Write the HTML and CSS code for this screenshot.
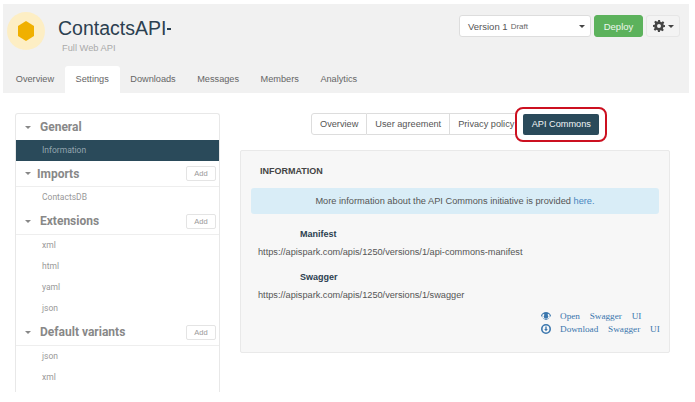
FILE: index.html
```html
<!DOCTYPE html>
<html lang="en">
<head>
<meta charset="utf-8">
<title>ContactsAPI</title>
<link rel="stylesheet" href="styles.css">
</head>
<body>
<header class="top">
  <div class="top-row">
    <div class="logo">
      <svg width="16" height="20" viewBox="0 0 16 20"><polygon points="8,0 16,5 16,15 8,20 0,15 0,5" fill="#f0b000"/></svg>
    </div>
    <div class="title-block">
      <h1 class="title">ContactsAPI<span class="title-caret"></span></h1>
      <div class="subtitle">Full Web API</div>
    </div>
    <div class="actions">
      <div class="version"><span class="version-name">Version 1</span> <small class="draft">Draft</small><span class="caret dark"></span></div>
      <button class="deploy">Deploy</button>
      <button class="gear">
        <svg width="12" height="12" viewBox="0 0 24 24"><path fill="#444" fill-rule="evenodd" d="M10 0h4l.7 3.4 2.2.9 2.9-1.9 2.8 2.8-1.9 2.9.9 2.2L24 10v4l-3.4.7-.9 2.2 1.9 2.9-2.8 2.8-2.9-1.9-2.2.9L14 24h-4l-.7-3.4-2.2-.9-2.9 1.9-2.8-2.8 1.9-2.9-.9-2.2L0 14v-4l3.4-.7.9-2.2-1.9-2.9 2.8-2.8 2.9 1.9 2.2-.9zM12 8a4 4 0 1 0 0 8 4 4 0 0 0 0-8z"/></svg>
        <span class="caret dark"></span>
      </button>
    </div>
  </div>
  <nav class="tabs">
    <a class="tab">Overview</a>
    <a class="tab active">Settings</a>
    <a class="tab">Downloads</a>
    <a class="tab">Messages</a>
    <a class="tab">Members</a>
    <a class="tab">Analytics</a>
  </nav>
</header>

<main class="main">
  <aside class="side">
    <div class="side-head first"><span class="caret"></span><span class="side-title">General</span></div>
    <div class="side-item selected">Information</div>
    <div class="side-head tight"><span class="caret"></span><span class="side-title">Imports</span><button class="add">Add</button></div>
    <div class="side-item">ContactsDB</div>
    <div class="side-head"><span class="caret"></span><span class="side-title">Extensions</span><button class="add">Add</button></div>
    <div class="side-item">xml</div>
    <div class="side-item">html</div>
    <div class="side-item">yaml</div>
    <div class="side-item">json</div>
    <div class="side-head"><span class="caret"></span><span class="side-title">Default variants</span><button class="add">Add</button></div>
    <div class="side-item">json</div>
    <div class="side-item">xml</div>
  </aside>

  <section class="content">
    <div class="pills">
      <a class="pill">Overview</a><a class="pill">User agreement</a><a class="pill last">Privacy policy</a>
      <span class="highlight"><a class="pill-on">API Commons</a></span>
    </div>
    <div class="panel">
      <h2 class="panel-title">INFORMATION</h2>
      <div class="alert">More information about the API Commons initiative is provided <a class="here">here.</a></div>
      <h3 class="label">Manifest</h3>
      <p class="url">https://apispark.com/apis/1250/versions/1/api-commons-manifest</p>
      <h3 class="label second">Swagger</h3>
      <p class="url">https://apispark.com/apis/1250/versions/1/swagger</p>
      <div class="links">
        <a class="link">
          <svg class="link-icon" width="10" height="8" viewBox="0 0 20 16"><path fill="#3a76ad" fill-rule="evenodd" d="M10 0C5.500 0 2 2.800 0 7c.8 1.800 2 3.300 3.400 4.400C2.800 10.200 2.500 9 2.500 7.800 2.500 6 3.300 4.400 4.600 3.300 5.800 5 7.800 6 10 6s4.200-1 5.400-2.700c1.300 1.100 2.100 2.700 2.100 4.500 0 1.200-.3 2.400-.9 3.600C18 10.300 19.200 8.800 20 7c-2-4.200-5.500-7-10-7z"/><circle cx="10" cy="9" r="4.500" fill="#3a76ad"/><path fill="#3a76ad" d="M3.400 11.400C5.200 13 7.500 14 10 14s4.800-1 6.600-2.600L16 12.500C14.300 14.400 12.300 15.500 10 15.500S5.700 14.400 4 12.500z"/></svg>
          <span>Open Swagger UI</span>
        </a>
        <a class="link">
          <svg class="link-icon" width="10" height="10" viewBox="0 0 22 22"><path fill="#3a76ad" fill-rule="evenodd" d="M11 0a11 11 0 1 0 0 22 11 11 0 0 0 0-22zm0 3.500a7.500 7.500 0 1 1 0 15 7.500 7.500 0 0 1 0-15z"/><path fill="#3a76ad" d="M9.500 5.500h3V11H15l-4 5-4-5h2.500z"/></svg>
          <span>Download Swagger UI</span>
        </a>
      </div>
    </div>
  </section>
</main>
</body>
</html>
```

FILE: styles.css
```css
* { box-sizing: border-box; }

html, body { margin: 0; padding: 0; }

body {
  width: 695px;
  height: 402px;
  overflow: hidden;
  background: #fff;
  font-family: "Liberation Sans", Arial, sans-serif;
  color: #555;
}

.top {
  margin: 4px 6px 0 3px;
  height: 89px;
  background: #f1f1f1;
  display: flex;
  flex-direction: column;
}

.top-row {
  height: 62px;
  display: flex;
  align-items: flex-start;
}

.logo {
  width: 38px;
  height: 38px;
  margin: 8px 0 0 4px;
  border-radius: 50%;
  background: #fdeec4;
  display: flex;
  align-items: center;
  justify-content: center;
  flex: none;
}

.title-block { margin-left: 13px; padding-top: 11px; }

.title {
  margin: 0;
  font-size: 19.500px;
  font-weight: 400;
  line-height: 26px;
  color: #2c4050;
  display: flex;
  align-items: center;
}

.title-caret {
  width: 4px;
  height: 1.500px;
  margin-left: 1px;
  margin-top: 2px;
  background: #2c4050;
}

.subtitle {
  margin: 2px 0 0 4px;
  font-size: 9.300px;
  line-height: 11px;
  color: #aaa;
}

.actions {
  margin-left: auto;
  margin-right: 9px;
  margin-top: 11px;
  display: flex;
  gap: 3px;
}

.version {
  width: 132px;
  height: 22px;
  padding-left: 8px;
  display: flex;
  align-items: center;
  gap: 3px;
  background: #fff;
  border: 1px solid #ddd;
  border-radius: 3px;
  font-size: 9.500px;
  color: #555;
}

.draft { margin-top: 1px; font-size: 8px; color: #666; }

.version .caret { margin-left: auto; margin-right: 5px; }

.deploy {
  width: 49px;
  height: 22px;
  padding: 0;
  border: 1px solid #5cb25c;
  border-radius: 3px;
  background: #5cb25c;
  color: #eef7ee;
  font: 9.500px "Liberation Sans", Arial, sans-serif;
}

.gear {
  width: 34px;
  height: 22px;
  padding: 0;
  border: 1px solid #e6e6e6;
  border-radius: 3px;
  background: #f3f3f3;
  display: flex;
  align-items: center;
  justify-content: center;
  gap: 3px;
}

.caret {
  display: inline-block;
  width: 0;
  height: 0;
  border-left: 3px solid transparent;
  border-right: 3px solid transparent;
  border-top: 3px solid #888;
  flex: none;
}

.caret.dark { border-top-color: #444; }

.tabs { display: flex; height: 27px; padding-left: 2px; }

.tab {
  padding: 0 10.750px;
  font-size: 9.200px;
  line-height: 27px;
  color: #666;
}

.tab.active {
  background: #fff;
  border-radius: 3px 3px 0 0;
}

.main { display: flex; align-items: flex-start; }

.side {
  width: 205px;
  height: 279px;
  margin: 20px 0 0 15px;
  border: 1px solid #e8e8e8;
  border-bottom: 0;
  border-radius: 3px 3px 0 0;
  flex: none;
}

.side-head {
  height: 26px;
  padding: 0 3px 0 9px;
  display: flex;
  align-items: center;
  border-bottom: 1px solid #eee;
  font-family: Roboto, sans-serif;
}

.side-head.first { border-bottom: 0; }

.side-head .caret { margin-right: 9px; }
.side-head.tight .caret { margin-right: 6px; }

.side-title {
  font-size: 12px;
  font-weight: 700;
  color: #888;
}

.add {
  margin-left: auto;
  width: 30px;
  height: 15px;
  padding: 0;
  border: 1px solid #e4e4e4;
  border-radius: 2px;
  background: #fff;
  color: #999;
  font: 7.500px "Liberation Sans", Arial, sans-serif;
}

.side-item {
  height: 21.300px;
  padding-left: 26px;
  font-family: Roboto, sans-serif;
  font-size: 8.500px;
  line-height: 21px;
  color: #999;
}

.side-item.selected { background: #2a4a5a; color: #93a5ae; }

.content {
  width: 430px;
  margin: 20px 0 0 20px;
  flex: none;
}

.pills {
  height: 37px;
  display: flex;
  align-items: flex-start;
  padding-left: 71px;
}

.pill {
  height: 22px;
  padding: 0 8px;
  border: 1px solid #ddd;
  border-left-width: 0;
  background: #fff;
  font-size: 9.200px;
  line-height: 20px;
  color: #555;
  white-space: nowrap;
}

.pill:first-child { border-left-width: 1px; border-radius: 3px 0 0 3px; }

.pill.last { width: 66px; border-right: 0; }

.highlight {
  position: relative;
  margin-left: 7px;
  margin-top: 1px;
  display: block;
}

.highlight::after {
  content: "";
  position: absolute;
  inset: -7px -8px -7px -8px;
  border: 2px solid #cc1020;
  border-radius: 8px;
}

.pill-on {
  display: block;
  height: 21px;
  padding: 0 8.500px;
  background: #2a4a5a;
  border-radius: 2px;
  color: #f0f4f6;
  font-size: 9.200px;
  line-height: 21px;
}

.panel {
  height: 203px;
  padding: 0 10px;
  background: #f7f7f7;
  border: 1px solid #e9e9e9;
  border-radius: 2px;
}

.panel-title {
  margin: 0 0 11px;
  padding: 15px 0 0 9px;
  font-size: 9px;
  line-height: 11px;
  font-weight: 700;
  color: #444;
}

.alert {
  height: 26px;
  background: #d9edf7;
  border-radius: 3px;
  text-align: center;
  font-size: 9.250px;
  line-height: 26px;
  color: #555;
}

.here { color: #4a86c0; }

.label {
  margin: 14px 0 0 49px;
  font-size: 9px;
  line-height: 12px;
  font-weight: 700;
  color: #2c4050;
}

.label.second { margin-top: 13px; }

.url {
  margin: 6px 0 0 7px;
  font-size: 9.200px;
  line-height: 12px;
  color: #555;
}

.links {
  width: 118px;
  margin: 8px 0 0 auto;
  display: flex;
  flex-direction: column;
}

.link {
  height: 13px;
  display: flex;
  align-items: center;
  gap: 9px;
  font-family: "Liberation Serif", serif;
  font-size: 9.200px;
  word-spacing: 7.500px;
  white-space: nowrap;
  color: #3a76ad;
}

.link-icon { flex: none; }
```
